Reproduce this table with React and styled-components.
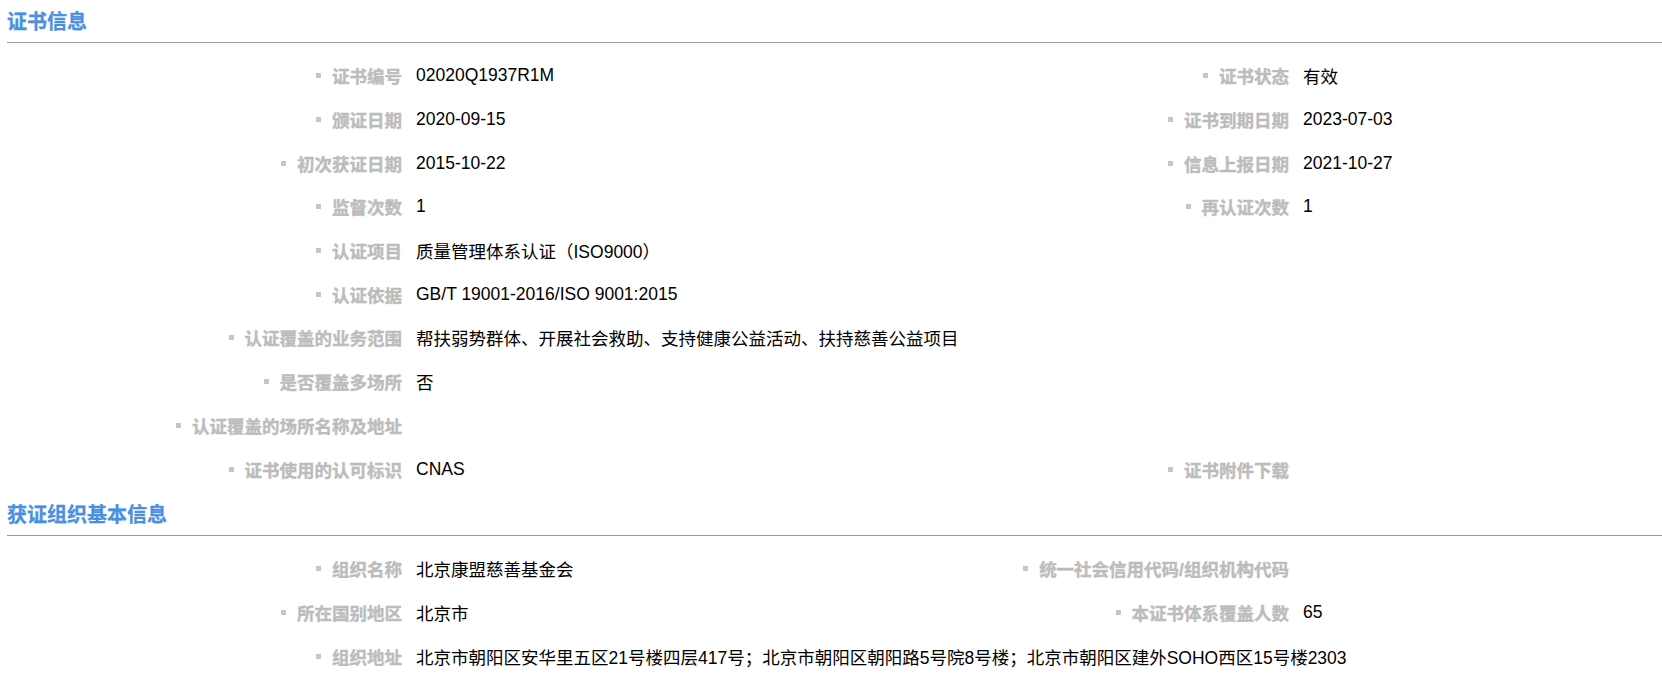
import React from 'react'
import styled, { createGlobalStyle } from 'styled-components'

const GlobalStyle = createGlobalStyle`
  html, body {
    margin: 0;
    padding: 0;
    background: #fff;
  }
  body {
    font-family: "Liberation Sans", Arial, "Noto Sans CJK SC", sans-serif;
  }
`

const Page = styled.div`
  width: 1662px;
`

// Section heading with the grey rule under it
const SectionTitle = styled.h2`
  margin: 0 0 0 7px;
  height: 42px;
  line-height: 42px;
  font-family: "Noto Sans CJK SC", sans-serif;
  font-size: 20px;
  font-weight: 700;
  -webkit-text-stroke: 0.3px currentColor;
  color: #4a8fe2;
  border-bottom: 1px solid #9a9a9a;
`

const InfoGrid = styled.div`
  display: grid;
  grid-template-columns: 416px 474px 413px 1fr;
  grid-auto-rows: 43.7px;
  align-items: center;
  padding: 11px 0 2px;
`

const Label = styled.div`
  grid-column: ${props => props.col};
  display: flex;
  justify-content: flex-end;
  align-items: center;
  gap: 11px;
  padding-right: 14px;
  font-family: "Liberation Sans", "Noto Sans CJK SC", sans-serif;
  font-size: 17.5px;
  font-weight: 700;
  -webkit-text-stroke: 0.4px currentColor;
  color: #bcbcbc;
  white-space: nowrap;

  &::before {
    content: '';
    width: 5px;
    height: 5px;
    background: #c6c6c6;
  }
`

const Value = styled.div`
  grid-column: ${props => props.span ? `${props.col} / -1` : props.col};
  font-size: 17.5px;
  color: #000;
  white-space: nowrap;
`

const Field = ({ label, value, right, wide }) => {
  const col = right ? 3 : 1
  return (
    <>
      <Label col={col}>{label}</Label>
      <Value col={col + 1} span={wide}>{value}</Value>
    </>
  )
}

const certRows = [
  [{ label: '证书编号', value: '02020Q1937R1M' }, { label: '证书状态', value: '有效' }],
  [{ label: '颁证日期', value: '2020-09-15' }, { label: '证书到期日期', value: '2023-07-03' }],
  [{ label: '初次获证日期', value: '2015-10-22' }, { label: '信息上报日期', value: '2021-10-27' }],
  [{ label: '监督次数', value: '1' }, { label: '再认证次数', value: '1' }],
  [{ label: '认证项目', value: '质量管理体系认证（ISO9000）', wide: true }],
  [{ label: '认证依据', value: 'GB/T 19001-2016/ISO 9001:2015', wide: true }],
  [{ label: '认证覆盖的业务范围', value: '帮扶弱势群体、开展社会救助、支持健康公益活动、扶持慈善公益项目', wide: true }],
  [{ label: '是否覆盖多场所', value: '否', wide: true }],
  [{ label: '认证覆盖的场所名称及地址', value: '', wide: true }],
  [{ label: '证书使用的认可标识', value: 'CNAS' }, { label: '证书附件下载', value: '' }]
]

const orgRows = [
  [{ label: '组织名称', value: '北京康盟慈善基金会' }, { label: '统一社会信用代码/组织机构代码', value: '' }],
  [{ label: '所在国别地区', value: '北京市' }, { label: '本证书体系覆盖人数', value: '65' }],
  [{ label: '组织地址', value: '北京市朝阳区安华里五区21号楼四层417号；北京市朝阳区朝阳路5号院8号楼；北京市朝阳区建外SOHO西区15号楼2303', wide: true }]
]

const Section = ({ title, rows }) => (
  <section>
    <SectionTitle>{title}</SectionTitle>
    <InfoGrid>
      {rows.map((row, i) => (
        <React.Fragment key={i}>
          <Field {...row[0]} />
          {row[1] && <Field {...row[1]} right />}
        </React.Fragment>
      ))}
    </InfoGrid>
  </section>
)

export default function App () {
  return (
    <Page>
      <GlobalStyle />
      <Section title='证书信息' rows={certRows} />
      <Section title='获证组织基本信息' rows={orgRows} />
    </Page>
  )
}
